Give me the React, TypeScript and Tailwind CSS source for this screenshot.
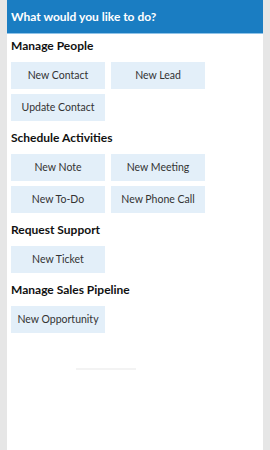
import React from "react";

const sections: { title: string; buttons: string[] }[] = [
  { title: "Manage People", buttons: ["New Contact", "New Lead", "Update Contact"] },
  { title: "Schedule Activities", buttons: ["New Note", "New Meeting", "New To-Do", "New Phone Call"] },
  { title: "Request Support", buttons: ["New Ticket"] },
  { title: "Manage Sales Pipeline", buttons: ["New Opportunity"] },
];

export default function App() {
  return (
    <div
      className="min-h-[450px] bg-[#e6e6e6] px-[7px] flex"
      style={{ fontFamily: 'Lato, "Open Sans", sans-serif' }}
    >
      <div className="w-[256px] bg-white flex flex-col">
        <div className="h-[34px] bg-[#1a7dc2] border-b border-[#8fc3e8] px-[4px] flex items-center text-white font-bold text-[12px]">
          What would you like to do?
        </div>
        <div className="px-[4px] pt-[2px] flex flex-col">
          {sections.map((s, i) => (
            <div key={s.title} className={i === 0 ? "" : "mt-[7px]"}>
              <div className="h-[20px] flex items-center font-bold text-[12px] text-[#111]">{s.title}</div>
              <div className="mt-[6px] grid grid-cols-[94px_94px] gap-x-[6px] gap-y-[5px]">
                {s.buttons.map((b) => (
                  <div
                    key={b}
                    className="h-[27px] bg-[#e3eff9] flex items-center justify-center text-[10.5px] text-[#333]"
                  >
                    {b}
                  </div>
                ))}
              </div>
            </div>
          ))}
          <div className="mt-[35px] ml-[65px] w-[60px] h-[2px] bg-[#f3f3f3]" />
        </div>
      </div>
    </div>
  );
}
